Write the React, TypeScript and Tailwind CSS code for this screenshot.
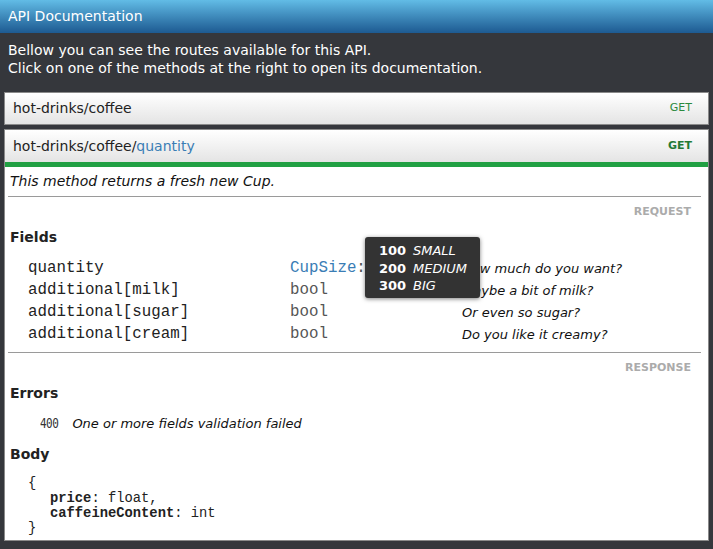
import React from 'react';

const fields = [
  { name: 'quantity', type: 'CupSize', desc: 'How much do you want?' },
  { name: 'additional[milk]', type: 'bool', desc: 'Maybe a bit of milk?' },
  { name: 'additional[sugar]', type: 'bool', desc: 'Or even so sugar?' },
  { name: 'additional[cream]', type: 'bool', desc: 'Do you like it creamy?' },
];

const sizes = [
  ['100', 'SMALL'],
  ['200', 'MEDIUM'],
  ['300', 'BIG'],
];

const App: React.FC = () => {
  return (
    <div className="min-h-[549px] bg-[#35373c] font-['DejaVu_Sans',sans-serif] text-[13px]">
      {/* Top bar */}
      <div className="h-[33px] bg-gradient-to-b from-[#62bce6] to-[#1d5a91] text-white text-[14px] px-[8px] flex items-center">
        API Documentation
      </div>

      {/* Intro */}
      <div className="pt-[8px] pb-[15px] px-[8px] text-white text-[14px] leading-[18px]">
        <p>Bellow you can see the routes available for this API.</p>
        <p>Click on one of the methods at the right to open its documentation.</p>
      </div>

      <div className="px-[4px] flex flex-col gap-[4px]">
        {/* Collapsed route */}
        <div className="h-[33px] border border-[#8a8a8a] bg-gradient-to-b from-white to-[#e4e4e4] flex items-center justify-between pl-[8px] pr-[16px]">
          <span className="text-[14px] text-[#222]">hot-drinks/coffee</span>
          <span className="text-[11px] text-[#2b8a3e]">GET</span>
        </div>

        {/* Open route */}
        <div className="border border-[#8a8a8a] bg-white">
          <div className="h-[32px] bg-gradient-to-b from-white to-[#e4e4e4] flex items-center justify-between pl-[8px] pr-[16px]">
            <span className="text-[14px] text-[#222]">
              hot-drinks/coffee/<span className="text-[#3a7db5]">quantity</span>
            </span>
            <span className="text-[11px] font-bold text-[#237a35]">GET</span>
          </div>
          <div className="h-[5px] bg-[#21a043]" />

          <div className="pl-[3px] pr-[7px] pb-[4px]">
            <div className="h-[29px] flex items-center pl-[2px] italic text-[14px] text-[#111]">
              This method returns a fresh new Cup.
            </div>
            <div className="border-t border-[#9a9a9a]" />
            <div className="h-[28px] pt-[2px] flex items-center justify-end pr-[10px] text-[11px] font-bold text-[#ababab]">
              REQUEST
            </div>
            <div className="h-[24px] flex items-center pl-[2px] text-[14px] font-bold text-[#222]">Fields</div>

            <div className="relative mt-[8px] ml-[20px]">
              {fields.map((f) => (
                <div key={f.name} className="h-[22px] grid grid-cols-[262px_172px_1fr] items-center">
                  <span className="font-['Liberation_Mono',monospace] text-[15.8px] text-[#222]">{f.name}</span>
                  <span className="font-['Liberation_Mono',monospace] text-[15.8px] text-[#555]">
                    {f.type === 'CupSize' ? (
                      <>
                        <span className="text-[#3a7db5]">CupSize</span>:int
                      </>
                    ) : (
                      f.type
                    )}
                  </span>
                  <span className="italic text-[13px] text-[#111]">{f.desc}</span>
                </div>
              ))}

              {/* Enum tooltip */}
              <div className="absolute left-[337px] top-[-20px] w-[115px] h-[61px] rounded-[3px] bg-[#333333] shadow-[0_1px_4px_rgba(0,0,0,0.5)] pt-[5px] pl-[14px] text-white text-[13px] leading-[17.5px]">
                {sizes.map(([n, label]) => (
                  <div key={n} className="flex">
                    <span className="font-bold w-[34px]">{n}</span>
                    <span className="italic">{label}</span>
                  </div>
                ))}
              </div>
            </div>

            <div className="mt-[7px] border-t border-[#9a9a9a]" />
            <div className="h-[28px] pt-[2px] flex items-center justify-end pr-[10px] text-[11px] font-bold text-[#ababab]">
              RESPONSE
            </div>
            <div className="h-[24px] flex items-center pl-[2px] text-[14px] font-bold text-[#222]">Errors</div>
            <div className="mt-[8px] h-[22px] flex items-center pl-[32px]">
              <span className="font-['DejaVu_Sans_Mono',monospace] text-[11px] tracking-[-0.5px] text-[#333] scale-y-125 inline-block">
                400
              </span>
              <span className="ml-[14px] italic text-[13px] text-[#111]">One or more fields validation failed</span>
            </div>
            <div className="mt-[7px] h-[24px] flex items-center pl-[2px] text-[14px] font-bold text-[#222]">Body</div>

            <div className="mt-[10px] pl-[20px] font-['Liberation_Mono',monospace] text-[13.8px] leading-[15px] text-[#222]">
              <div>{'{'}</div>
              <div className="pl-[22px]">
                <span className="font-bold">price</span>: float,
              </div>
              <div className="pl-[22px]">
                <span className="font-bold">caffeineContent</span>: int
              </div>
              <div>{'}'}</div>
            </div>
          </div>
        </div>
      </div>
    </div>
  );
};

export default App;
